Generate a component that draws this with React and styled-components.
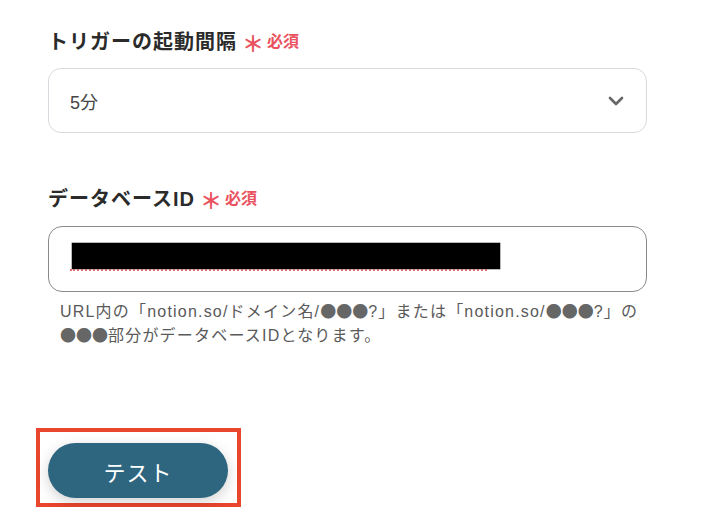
import React from "react";
import styled, { createGlobalStyle } from "styled-components";

const GlobalStyle = createGlobalStyle`
	body {
		margin: 0;
		background: #ffffff;
		font-family: "Noto Sans CJK JP", "Noto Sans", sans-serif;
	}
`;

const Page = styled.div`
	width: 599px;
	padding: 28px 0 0 48px;
	display: flex;
	flex-direction: column;
`;

const Field = styled.div`
	display: flex;
	flex-direction: column;
	margin-bottom: ${props => props.$gap || 0}px;
`;

const Label = styled.div`
	display: flex;
	align-items: center;
	height: 24px;
	margin-bottom: ${props => props.$gap}px;
	font-family: "Liberation Sans", "Noto Sans CJK JP", sans-serif;
	font-size: 20px;
	font-weight: 700;
	color: #2b2b2b;
	letter-spacing: 1px;
`;

const Required = styled.span`
	display: inline-flex;
	align-items: center;
	margin-left: 5px;
	font-family: "Noto Sans CJK JP", sans-serif;
	font-size: 16px;
	font-weight: 700;
	color: #e9525e;
	letter-spacing: 0;
`;

const Star = styled.span`
	font-size: 22px;
	font-weight: 700;
	margin-right: 3px;
	line-height: 1;
	position: relative;
	top: 2px;
`;

const Select = styled.div`
	box-sizing: border-box;
	height: 65px;
	border: 1px solid #d6dadf;
	border-radius: 13px;
	display: flex;
	align-items: center;
	justify-content: space-between;
	padding: 0 22px 0 21px;
	font-family: "Liberation Sans", "Noto Sans CJK JP", sans-serif;
	font-size: 18px;
	color: #454545;
`;

const Input = styled.div`
	box-sizing: border-box;
	height: 66px;
	border: 1px solid #8a8a8a;
	border-radius: 14px;
	padding: 16px 0 0 23px;
`;

const Redacted = styled.div`
	width: 428px;
	height: 26px;
	background: #000;
	box-shadow: 0 0 0 0.5px #777;
`;

const Squiggle = styled.div`
	width: 417px;
	margin-left: -2px;
	border-bottom: 2px dotted #e06a6a;
`;

const Help = styled.p`
	margin: 7px 0 0 12px;
	font-family: "Liberation Sans", "Noto Sans CJK JP", sans-serif;
	font-size: 16px;
	line-height: 23px;
	color: #5a5a5a;
	letter-spacing: 1.2px;
	white-space: nowrap;
`;

const Dots = styled.span`
	font-family: "Noto Sans CJK JP", sans-serif;
	font-size: 16px;
	color: #666;
	letter-spacing: 0;
`;

const Frame = styled.div`
	box-sizing: border-box;
	width: 205px;
	height: 79px;
	margin: 81px 0 0 -12px;
	border: 4px solid #e8462d;
	padding: 11px 0 0 8px;
`;

const Button = styled.button`
	width: 180px;
	height: 55px;
	border: none;
	border-radius: 28px;
	background: #2e6680;
	color: #ffffff;
	font-family: "Noto Sans CJK JP", sans-serif;
	font-size: 22px;
	font-weight: 400;
	letter-spacing: 1px;
	box-shadow: 0 4px 14px rgba(0, 0, 0, 0.18);
	cursor: pointer;
`;

const Chevron = () => (
	<svg width="16" height="10" viewBox="0 0 16 10">
		<path
			d="M2 2 L8 8 L14 2"
			fill="none"
			stroke="#666"
			strokeWidth="2.6"
			strokeLinecap="round"
			strokeLinejoin="round"
		/>
	</svg>
);

const App = () => {
	return (
		<Page>
			<GlobalStyle />
			<Field $gap={52}>
				<Label $gap={16}>
					トリガーの起動間隔
					<Required>
						<Star>＊</Star>必須
					</Required>
				</Label>
				<Select>
					<span>5分</span>
					<Chevron />
				</Select>
			</Field>
			<Field>
				<Label $gap={17}>
					データベースID
					<Required>
						<Star>＊</Star>必須
					</Required>
				</Label>
				<Input>
					<Redacted />
					<Squiggle />
				</Input>
				<Help>
					URL内の「notion.so/ドメイン名/<Dots>●●●</Dots>?」または「notion.so/
					<Dots>●●●</Dots>?」の
					<br />
					<Dots>●●●</Dots>部分がデータベースIDとなります。
				</Help>
			</Field>
			<Frame>
				<Button>テスト</Button>
			</Frame>
		</Page>
	);
};

export default App;
